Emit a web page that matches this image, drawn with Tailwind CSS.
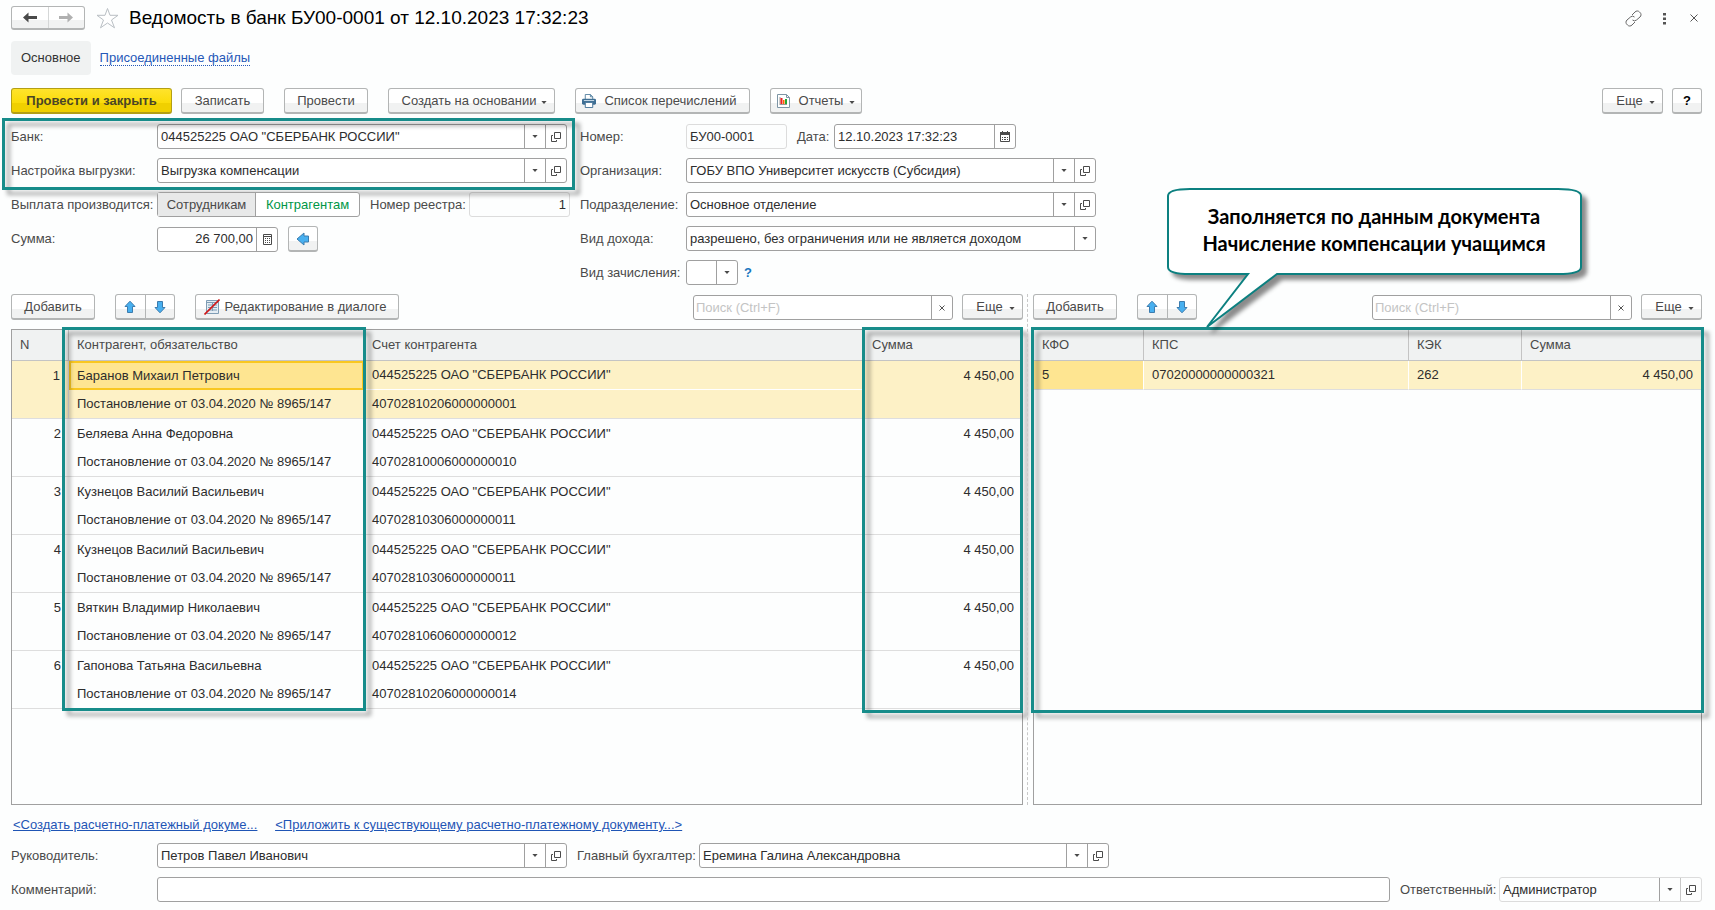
<!DOCTYPE html>
<html lang="ru">
<head>
<meta charset="utf-8">
<title>Ведомость в банк БУ00-0001</title>
<script src="https://cdn.jsdelivr.net/npm/@tailwindcss/browser@4"></script>
</head>
<body class="min-h-screen flex flex-col bg-[#fdfefe] pl-[11px] pr-[13px] pt-[6px] pb-2 text-[13px] leading-5 text-[#4a4a4a] font-['Liberation_Sans',Arial,sans-serif]">

<!-- Shared icons -->
<svg class="hidden" aria-hidden="true">
  <symbol id="caret" viewBox="0 0 7 4"><path d="M0 0h7L3.500 4z" fill="#4a4a4a"/></symbol>
  <symbol id="open" viewBox="0 0 10 10"><path d="M3.500.5h6v6h-6zM2 3.500H.5v6h5V8" fill="none" stroke="#4a4a4a"/></symbol>
  <symbol id="up" viewBox="0 0 14 14"><path d="M7 1.200l5 5.300H9.500v6h-5v-6H2z" fill="#48b0f0" stroke="#3c7cae"/></symbol>
  <symbol id="down" viewBox="0 0 14 14"><path d="M7 12.800l5-5.300H9.500v-6h-5v6H2z" fill="#48b0f0" stroke="#3c7cae"/></symbol>
</svg>

<header class="flex items-center h-6">
  <div class="flex h-6 w-[74px] border border-b-2 border-[#b3b5b5] rounded-[3px] bg-[linear-gradient(#fff_60%,#f1f2f2_60%)]">
    <button aria-label="Назад" class="flex-1 flex items-center justify-center border-r border-[#d5d7d7]"><svg class="w-[14px] h-[11px]" viewBox="0 0 14 11"><path d="M0 5.500L5.500.5v3.500H14v3H5.500v3.500z" fill="#4a4a4a"/></svg></button>
    <button aria-label="Вперед" class="flex-1 flex items-center justify-center"><svg class="w-[14px] h-[11px]" viewBox="0 0 14 11"><path d="M14 5.500L8.500.5v3.500H0v3h8.500v3.500z" fill="#b0b0b0"/></svg></button>
  </div>
  <button aria-label="В избранное" class="ml-[11px]"><svg class="w-[23px] h-[22px]" viewBox="0 0 23 22"><path d="M11.500 1.500l2.500 6.800h8l-6.500 4.700 3 7.800-7-4.800-7 4.800 3-7.800L1 8.300h8z" fill="#fff" stroke="#b9bfc4"/></svg></button>
  <h1 class="ml-[10px] flex-1 text-[19px] text-black">Ведомость в банк БУ00-0001 от 12.10.2023 17:32:23</h1>
  <button aria-label="Получить ссылку"><svg class="w-[17px] h-[17px]" viewBox="0 0 17 17" fill="none" stroke="#666"><path d="M7 5l3-3a3 3 0 0 1 4.500 0l.5.500a3 3 0 0 1 0 4.500l-3.500 3a3 3 0 0 1-4 0M10 12l-3 3a3 3 0 0 1-4.500 0L2 14.500a3 3 0 0 1 0-4.500l3.500-3a3 3 0 0 1 4 0"/></svg></button>
  <button aria-label="Меню" class="ml-5"><svg class="w-[5px] h-[13px]" viewBox="0 0 5 13" fill="#555"><path d="M1 1h3v2.500H1zM1 5.500h3V8H1zM1 10h3v2.500H1z"/></svg></button>
  <button aria-label="Закрыть" class="ml-[23px] mr-1"><svg class="w-2 h-2" viewBox="0 0 8 8"><path d="M.5.5l7 7M7.500.5l-7 7" stroke="#555"/></svg></button>
</header>

<nav class="mt-[11px] flex items-center h-[34px]">
  <a href="#" class="flex items-center h-full px-[10px] rounded-[4px] bg-[#f0f2f2] text-[#333]">Основное</a>
  <a href="#" class="ml-[9px] leading-[15px] text-[#2558b8] border-b border-dotted border-[#2558b8]">Присоединенные файлы</a>
</nav>

<div class="mt-[13px] flex h-[26px] [&>button]:flex [&>button]:items-center [&>button]:justify-center [&>button]:border [&>button]:border-b-2 [&>button]:pt-px [&>button]:rounded-[3px]">
  <button class="w-[161px] font-bold text-[#4a4526] border-[#b39f14] bg-[linear-gradient(#ffe32c,#fbdc0a_60%,#f0d000_60%)]">Провести и закрыть</button>
  <button class="ml-[9px] w-[83px] border-[#b3b5b5] bg-[linear-gradient(#fff_60%,#f1f2f2_60%)]">Записать</button>
  <button class="ml-5 w-[84px] border-[#b3b5b5] bg-[linear-gradient(#fff_60%,#f1f2f2_60%)]">Провести</button>
  <button class="ml-5 w-[167px] gap-[5px] pl-[6px] border-[#b3b5b5] bg-[linear-gradient(#fff_60%,#f1f2f2_60%)]">Создать на основании<svg class="w-[6px] h-[3px] mt-[3px]"><use href="#caret"/></svg></button>
  <button class="ml-5 w-[175px] gap-2 pr-[6px] border-[#b3b5b5] bg-[linear-gradient(#fff_60%,#f1f2f2_60%)]"><svg class="w-[14px] h-[14px]" viewBox="0 0 15 15"><path d="M3.500 6V.5h5.500l2.500 2.500v3" fill="#fff" stroke="#54809f"/><path d="M9 .5V3h2.500" fill="none" stroke="#54809f"/><rect y="5" width="15" height="6.500" rx="1.500" fill="#3f6f94"/><path d="M2 7h11" stroke="#cfe0ec"/><path d="M3.500 9h8v5.500h-8z" fill="#fff" stroke="#3f6f94"/></svg>Список перечислений</button>
  <button class="ml-5 w-[92px] gap-[6px] border-[#b3b5b5] bg-[linear-gradient(#fff_60%,#f1f2f2_60%)]"><svg class="w-[13px] h-[14px] mr-[3px]" viewBox="0 0 13 14"><path d="M.5.5h9l3 3v10H.5z" fill="#fff" stroke="#7d95a5"/><path d="M9.500.5v3h3" fill="none" stroke="#7d95a5"/><path d="M3 3v8M3 10.500h7" stroke="#999"/><path d="M3.500 4h2v6h-2z" fill="#e22"/><path d="M6 6h1.500v4H6z" fill="#f60"/><path d="M8 5h2v5H8z" fill="#2a3"/></svg>Отчеты<svg class="w-[6px] h-[3px] mt-[3px]"><use href="#caret"/></svg></button>
  <button class="ml-auto w-[61px] gap-[6px] pl-[6px] border-[#b3b5b5] bg-[linear-gradient(#fff_60%,#f1f2f2_60%)]">Еще<svg class="w-[6px] h-[3px] mt-[3px]"><use href="#caret"/></svg></button>
  <button class="ml-[9px] w-[30px] font-bold text-black border-[#b3b5b5] bg-[linear-gradient(#fff_60%,#f1f2f2_60%)]">?</button>
</div>

<!-- Document fields -->
<form class="mt-[10px] flex gap-[10px] [&_input]:min-w-0 [&_input]:text-[#2d2d2d] [&_input]:outline-none [&_select]:appearance-none [&_select]:outline-none [&_select]:text-[#2d2d2d]">
  <div class="w-[559px] flex flex-col gap-[9px]">
    <div class="relative flex flex-col gap-[9px]">
      <div class="flex items-center h-[25px] pr-[3px]">
        <label for="bank" class="w-[146px]">Банк:</label>
        <div class="flex flex-1 h-full bg-white border border-[#a0a0a0] rounded-[3px]"><input id="bank" class="flex-1 pl-[3px]" value='044525225 ОАО "СБЕРБАНК РОССИИ"'><button type="button" aria-label="Выбрать" class="w-[21px] border-l border-[#a0a0a0] flex items-center justify-center"><svg class="w-[6px] h-[3px]"><use href="#caret"/></svg></button><button type="button" aria-label="Открыть" class="w-[21px] border-l border-[#a0a0a0] flex items-center justify-center"><svg class="w-[10px] h-[10px]"><use href="#open"/></svg></button></div>
      </div>
      <div class="flex items-center h-[25px] pr-[3px]">
        <label for="setup" class="w-[146px]">Настройка выгрузки:</label>
        <div class="flex flex-1 h-full bg-white border border-[#a0a0a0] rounded-[3px]"><input id="setup" class="flex-1 pl-[3px]" value="Выгрузка компенсации"><button type="button" aria-label="Выбрать" class="w-[21px] border-l border-[#a0a0a0] flex items-center justify-center"><svg class="w-[6px] h-[3px]"><use href="#caret"/></svg></button><button type="button" aria-label="Открыть" class="w-[21px] border-l border-[#a0a0a0] flex items-center justify-center"><svg class="w-[10px] h-[10px]"><use href="#open"/></svg></button></div>
      </div>
      <div class="absolute pointer-events-none -top-[6px] -left-[9px] -right-[5px] h-[72px] border-3 border-[#178c8a] drop-shadow-[5px_5px_2px_rgba(0,0,0,0.35)]"></div>
    </div>
    <div class="flex items-center h-[25px]">
      <span class="w-[146px] whitespace-nowrap">Выплата производится:</span>
      <div role="radiogroup" aria-label="Выплата производится" class="relative flex h-full w-[203px] border border-[#a0a0a0] rounded-[3px] bg-white">
        <input id="pay-emp" type="radio" name="pay" class="sr-only"><label for="pay-emp" class="w-[98px] flex items-center justify-center bg-[#e8e9e9] border-r border-[#a0a0a0]">Сотрудникам</label>
        <input id="pay-ctr" type="radio" name="pay" class="sr-only" checked><label for="pay-ctr" class="flex-1 flex items-center justify-center text-[#009646]">Контрагентам</label>
      </div>
      <label for="reg" class="ml-[10px] w-[99px] whitespace-nowrap">Номер реестра:</label>
      <input id="reg" class="flex-1 h-full px-[3px] text-right border border-[#dcdcdc] rounded-[3px]" value="1" readonly>
    </div>
    <div class="flex items-center h-[26px]">
      <label for="sum" class="w-[146px]">Сумма:</label>
      <div class="flex w-[121px] h-[25px] bg-white border border-[#a0a0a0] rounded-[3px]"><input id="sum" class="flex-1 pr-[3px] text-right" value="26 700,00"><button type="button" aria-label="Калькулятор" class="w-[21px] border-l border-[#a0a0a0] flex items-center justify-center"><svg class="w-[9px] h-[11px]" viewBox="0 0 9 11"><path d="M.5.5h8v10h-8zM0 2.500h9" fill="none" stroke="#4a4a4a"/><path d="M2 4.500h1m1 0h1m1 0h1M2 6.500h1m1 0h1m1 0h1M2 8.500h1m1 0h1m1 0h1" stroke="#4a4a4a"/></svg></button></div>
      <button type="button" aria-label="Заполнить сумму" class="ml-[10px] w-[30px] h-full flex items-center justify-center border border-b-2 border-[#b3b5b5] rounded-[3px] bg-[linear-gradient(#fff_60%,#f1f2f2_60%)]"><svg class="w-[14px] h-[14px]" viewBox="0 0 14 14"><path d="M1 7l7-6v3h4.500v6H8v3z" fill="#48b0f0" stroke="#3c7cae"/></svg></button>
    </div>
  </div>

  <div class="w-[516px] flex flex-col gap-[9px]">
    <div class="flex items-center h-[25px]">
      <label for="num" class="w-[106px]">Номер:</label>
      <input id="num" class="w-[101px] h-full pl-[3px] border border-[#dcdcdc] rounded-[3px]" value="БУ00-0001" readonly>
      <label for="date" class="ml-[10px] w-[37px]">Дата:</label>
      <div class="flex w-[182px] h-full bg-white border border-[#a0a0a0] rounded-[3px]"><input id="date" class="flex-1 pl-[3px]" value="12.10.2023 17:32:23"><button type="button" aria-label="Календарь" class="w-[21px] border-l border-[#a0a0a0] flex items-center justify-center"><svg class="w-[10px] h-[11px]" viewBox="0 0 10 11"><path d="M.5 1.500h9v9h-9z" fill="none" stroke="#4a4a4a"/><path d="M0 1h10v3H0zM2 0h1v1H2zM7 0h1v1H7z" fill="#4a4a4a"/><path d="M2 6.500h1m1 0h2m1 0h1M2 8.500h1m1 0h2m1 0h1" stroke="#4a4a4a"/></svg></button></div>
    </div>
    <div class="flex items-center h-[25px]">
      <label for="org" class="w-[106px]">Организация:</label>
      <div class="flex flex-1 h-full bg-white border border-[#a0a0a0] rounded-[3px]"><input id="org" class="flex-1 pl-[3px]" value="ГОБУ ВПО Университет искусств (Субсидия)"><button type="button" aria-label="Выбрать" class="w-[21px] border-l border-[#a0a0a0] flex items-center justify-center"><svg class="w-[6px] h-[3px]"><use href="#caret"/></svg></button><button type="button" aria-label="Открыть" class="w-[21px] border-l border-[#a0a0a0] flex items-center justify-center"><svg class="w-[10px] h-[10px]"><use href="#open"/></svg></button></div>
    </div>
    <div class="flex items-center h-[25px]">
      <label for="dep" class="w-[106px]">Подразделение:</label>
      <div class="flex flex-1 h-full bg-white border border-[#a0a0a0] rounded-[3px]"><input id="dep" class="flex-1 pl-[3px]" value="Основное отделение"><button type="button" aria-label="Выбрать" class="w-[21px] border-l border-[#a0a0a0] flex items-center justify-center"><svg class="w-[6px] h-[3px]"><use href="#caret"/></svg></button><button type="button" aria-label="Открыть" class="w-[21px] border-l border-[#a0a0a0] flex items-center justify-center"><svg class="w-[10px] h-[10px]"><use href="#open"/></svg></button></div>
    </div>
    <div class="flex items-center h-[25px]">
      <label for="income" class="w-[106px]">Вид дохода:</label>
      <div class="flex flex-1 h-full bg-white border border-[#a0a0a0] rounded-[3px]"><select id="income" class="flex-1 pl-[3px]"><option>разрешено, без ограничения или не является доходом</option></select><span class="w-[21px] border-l border-[#a0a0a0] flex items-center justify-center"><svg class="w-[6px] h-[3px]"><use href="#caret"/></svg></span></div>
    </div>
    <div class="flex items-center h-[25px]">
      <label for="kind" class="w-[106px] whitespace-nowrap">Вид зачисления:</label>
      <div class="flex w-[52px] h-full bg-white border border-[#a0a0a0] rounded-[3px]"><select id="kind" class="flex-1 min-w-0 pl-[3px]"><option></option></select><span class="w-[21px] border-l border-[#a0a0a0] flex items-center justify-center"><svg class="w-[6px] h-[3px]"><use href="#caret"/></svg></span></div>
      <a href="#" class="ml-[6px] font-bold text-[#1a77c0]">?</a>
    </div>
  </div>
</form>

<!-- Tabular sections -->
<div class="mt-[9px] flex-1 grid grid-cols-[1012fr_669fr] gap-[10px] relative">
  <section class="relative flex flex-col after:absolute after:-right-[5px] after:top-0 after:bottom-0 after:border-l after:border-dashed after:border-[#c8c8c8]">
    <div class="flex h-[26px]">
      <button class="w-[84px] pt-px border border-b-2 border-[#b3b5b5] rounded-[3px] bg-[linear-gradient(#fff_60%,#f1f2f2_60%)]">Добавить</button>
      <div class="ml-5 flex w-[60px] border border-b-2 border-[#b3b5b5] rounded-[3px] bg-[linear-gradient(#fff_60%,#f1f2f2_60%)]">
        <button aria-label="Вверх" class="flex-1 flex items-center justify-center border-r border-[#b3b5b5]"><svg class="w-[14px] h-[14px]"><use href="#up"/></svg></button>
        <button aria-label="Вниз" class="flex-1 flex items-center justify-center"><svg class="w-[14px] h-[14px]"><use href="#down"/></svg></button>
      </div>
      <button class="ml-5 w-[204px] pt-px pr-1 flex items-center justify-center gap-[5px] border border-b-2 border-[#b3b5b5] rounded-[3px] bg-[linear-gradient(#fff_60%,#f1f2f2_60%)]"><svg class="w-4 h-4" viewBox="0 0 16 16"><path d="M2.500 1.500h12v13h-12z" fill="#e4edf4" stroke="#7f9db5"/><path d="M3 3.500h11M4 6h4m1 0h4M4 8.500h4m1 0h4M4 11h4m1 0h4M8.500 3v9" stroke="#7f9db5"/><path d="M.5 15.500l15-15" stroke="#d01818" stroke-width="1.600"/></svg>Редактирование в диалоге</button>
      <div class="ml-auto flex w-[260px] mt-px bg-white border border-[#a0a0a0] rounded-[3px]"><input type="text" aria-label="Поиск" placeholder="Поиск (Ctrl+F)" class="flex-1 min-w-0 pl-[2px] placeholder:text-[#c4c4c4]"><button aria-label="Очистить" class="w-[21px] border-l border-[#a0a0a0] flex items-center justify-center"><svg class="w-[6px] h-[6px]" viewBox="0 0 6 6"><path d="M.5.5l5 5M5.500.5l-5 5" stroke="#555"/></svg></button></div>
      <button class="ml-[9px] w-[61px] pt-px flex items-center justify-center gap-[6px] pl-[6px] border border-b-2 border-[#b3b5b5] rounded-[3px] bg-[linear-gradient(#fff_60%,#f1f2f2_60%)]">Еще<svg class="w-[6px] h-[3px] mt-[3px]"><use href="#caret"/></svg></button>
    </div>
    <div class="relative mt-[9px] flex-1 border border-[#a0a0a0]">
      <table class="w-full table-fixed border-separate border-spacing-0 text-[#2d2d2d] [&_td]:h-[29px] [&_td]:p-0 [&_td]:pl-2 [&_td]:whitespace-nowrap [&_td.num]:pr-2 [&_td.num]:text-right [&_tr:nth-child(even)>td]:border-b [&_tr:nth-child(even)>td]:border-[#dedede] [&_td[rowspan]]:border-b [&_td[rowspan]]:border-[#dedede] [&_td[rowspan]]:align-top [&_td[rowspan]]:pt-[5px]">
        <colgroup><col class="w-[57px]"><col class="w-[295px]"><col><col class="w-[158px]"></colgroup>
        <thead><tr class="h-[31px] bg-[#f0f2f2] text-left text-[#4a4a4a] [&>th]:font-normal [&>th]:pl-2 [&>th]:border-b [&>th]:border-[#c4c4c4]">
          <th class="border-r">N</th><th class="border-r">Контрагент, обязательство</th><th class="border-r">Счет контрагента</th><th>Сумма</th></tr></thead>
        <tbody>
          <tr class="bg-[#fdf1c6]"><td rowspan="2" class="num border-r border-r-white">1</td><td class="bg-[#fee591] shadow-[inset_0_0_0_2px_#f9c720]">Баранов Михаил Петрович</td><td class="border-b border-b-white">044525225 ОАО "СБЕРБАНК РОССИИ"</td><td rowspan="2" class="num">4 450,00</td></tr>
          <tr class="bg-[#fdf1c6]"><td>Постановление от 03.04.2020 № 8965/147</td><td>40702810206000000001</td></tr>
          <tr><td rowspan="2" class="num">2</td><td>Беляева Анна Федоровна</td><td>044525225 ОАО "СБЕРБАНК РОССИИ"</td><td rowspan="2" class="num">4 450,00</td></tr>
          <tr><td>Постановление от 03.04.2020 № 8965/147</td><td>40702810006000000010</td></tr>
          <tr><td rowspan="2" class="num">3</td><td>Кузнецов Василий Васильевич</td><td>044525225 ОАО "СБЕРБАНК РОССИИ"</td><td rowspan="2" class="num">4 450,00</td></tr>
          <tr><td>Постановление от 03.04.2020 № 8965/147</td><td>40702810306000000011</td></tr>
          <tr><td rowspan="2" class="num">4</td><td>Кузнецов Василий Васильевич</td><td>044525225 ОАО "СБЕРБАНК РОССИИ"</td><td rowspan="2" class="num">4 450,00</td></tr>
          <tr><td>Постановление от 03.04.2020 № 8965/147</td><td>40702810306000000011</td></tr>
          <tr><td rowspan="2" class="num">5</td><td>Вяткин Владимир Николаевич</td><td>044525225 ОАО "СБЕРБАНК РОССИИ"</td><td rowspan="2" class="num">4 450,00</td></tr>
          <tr><td>Постановление от 03.04.2020 № 8965/147</td><td>40702810606000000012</td></tr>
          <tr><td rowspan="2" class="num">6</td><td>Гапонова Татьяна Васильевна</td><td>044525225 ОАО "СБЕРБАНК РОССИИ"</td><td rowspan="2" class="num">4 450,00</td></tr>
          <tr><td>Постановление от 03.04.2020 № 8965/147</td><td>40702810206000000014</td></tr>
        </tbody>
      </table>
      <div class="absolute pointer-events-none -top-[3px] left-[50px] w-[304px] h-[384px] border-3 border-[#178c8a] drop-shadow-[5px_5px_2px_rgba(0,0,0,0.35)]"></div>
      <div class="absolute pointer-events-none -top-[3px] -right-px w-[161px] h-[386px] border-3 border-[#178c8a] drop-shadow-[5px_5px_2px_rgba(0,0,0,0.35)]"></div>
    </div>
  </section>

  <section class="relative flex flex-col">
    <div class="flex h-[26px]">
      <button class="w-[84px] pt-px border border-b-2 border-[#b3b5b5] rounded-[3px] bg-[linear-gradient(#fff_60%,#f1f2f2_60%)]">Добавить</button>
      <div class="ml-5 flex w-[60px] border border-b-2 border-[#b3b5b5] rounded-[3px] bg-[linear-gradient(#fff_60%,#f1f2f2_60%)]">
        <button aria-label="Вверх" class="flex-1 flex items-center justify-center border-r border-[#b3b5b5]"><svg class="w-[14px] h-[14px]"><use href="#up"/></svg></button>
        <button aria-label="Вниз" class="flex-1 flex items-center justify-center"><svg class="w-[14px] h-[14px]"><use href="#down"/></svg></button>
      </div>
      <div class="ml-auto flex w-[260px] mt-px bg-white border border-[#a0a0a0] rounded-[3px]"><input type="text" aria-label="Поиск" placeholder="Поиск (Ctrl+F)" class="flex-1 min-w-0 pl-[2px] placeholder:text-[#c4c4c4]"><button aria-label="Очистить" class="w-[21px] border-l border-[#a0a0a0] flex items-center justify-center"><svg class="w-[6px] h-[6px]" viewBox="0 0 6 6"><path d="M.5.5l5 5M5.500.5l-5 5" stroke="#555"/></svg></button></div>
      <button class="ml-[9px] w-[61px] pt-px flex items-center justify-center gap-[6px] pl-[6px] border border-b-2 border-[#b3b5b5] rounded-[3px] bg-[linear-gradient(#fff_60%,#f1f2f2_60%)]">Еще<svg class="w-[6px] h-[3px] mt-[3px]"><use href="#caret"/></svg></button>
    </div>
    <div class="relative mt-[9px] flex-1 border border-[#a0a0a0]">
      <table class="w-full table-fixed border-separate border-spacing-0 text-[#2d2d2d]">
        <colgroup><col class="w-[110px]"><col><col class="w-[113px]"><col class="w-[179px]"></colgroup>
        <thead><tr class="h-[31px] bg-[#f0f2f2] text-left text-[#4a4a4a] [&>th]:font-normal [&>th]:pl-2 [&>th]:border-b [&>th]:border-[#c4c4c4]">
          <th class="border-r">КФО</th><th class="border-r">КПС</th><th class="border-r">КЭК</th><th>Сумма</th></tr></thead>
        <tbody><tr class="h-[29px] bg-[#fdf1c6] *:pl-2 *:border-b *:border-b-[#dedede] *:not-last:border-r *:not-last:border-r-white"><td class="bg-[#fee591]">5</td><td>07020000000000321</td><td>262</td><td class="pr-2 text-right">4 450,00</td></tr></tbody>
      </table>
      <div class="absolute pointer-events-none -top-[3px] -left-[3px] -right-[3px] h-[386px] border-3 border-[#178c8a] drop-shadow-[5px_5px_2px_rgba(0,0,0,0.35)]"></div>
    </div>
    <!-- Callout pointing at the right table -->
    <div class="absolute right-[120px] -top-[107px] w-[416px] h-[142px]">
      <svg class="absolute inset-0 w-full h-full overflow-visible drop-shadow-[5px_5px_2px_rgba(0,0,0,0.45)]" viewBox="0 0 416 142"><path d="M24 2H392Q415 2 415 9V80Q415 87 392 87H111L41 140L82 87H24Q2 87 2 80V9Q2 2 24 2Z" fill="#fff" stroke="#0c8080" stroke-width="2"/></svg>
      <p class="relative pt-4 text-center text-[20px] leading-[27px] font-bold text-black font-[Lato,sans-serif]">Заполняется по данным документа<br>Начисление компенсации учащимся</p>
    </div>
  </section>
</div>

<footer class="[&_input]:min-w-0 [&_input]:text-[#2d2d2d] [&_input]:outline-none">
  <div class="mt-[10px] h-5 flex gap-[18px] pl-[2px] text-[#1f55b5] underline">
    <a href="#">&lt;Создать расчетно-платежный докуме...</a>
    <a href="#">&lt;Приложить к существующему расчетно-платежному документу...&gt;</a>
  </div>
  <div class="mt-2 flex items-center h-[25px]">
    <label for="head" class="w-[146px]">Руководитель:</label>
    <div class="flex w-[410px] h-full bg-white border border-[#a0a0a0] rounded-[3px]"><input id="head" class="flex-1 pl-[3px]" value="Петров Павел Иванович"><button aria-label="Выбрать" class="w-[21px] border-l border-[#a0a0a0] flex items-center justify-center"><svg class="w-[6px] h-[3px]"><use href="#caret"/></svg></button><button aria-label="Открыть" class="w-[21px] border-l border-[#a0a0a0] flex items-center justify-center"><svg class="w-[10px] h-[10px]"><use href="#open"/></svg></button></div>
    <label for="acc" class="ml-[10px] w-[122px] whitespace-nowrap">Главный бухгалтер:</label>
    <div class="flex w-[410px] h-full bg-white border border-[#a0a0a0] rounded-[3px]"><input id="acc" class="flex-1 pl-[3px]" value="Еремина Галина Александровна"><button aria-label="Выбрать" class="w-[21px] border-l border-[#a0a0a0] flex items-center justify-center"><svg class="w-[6px] h-[3px]"><use href="#caret"/></svg></button><button aria-label="Открыть" class="w-[21px] border-l border-[#a0a0a0] flex items-center justify-center"><svg class="w-[10px] h-[10px]"><use href="#open"/></svg></button></div>
  </div>
  <div class="mt-[9px] flex items-center h-[25px]">
    <label for="comment" class="w-[146px]">Комментарий:</label>
    <input id="comment" class="flex-1 h-full px-[3px] bg-white border border-[#a0a0a0] rounded-[3px]">
    <label for="resp" class="ml-[10px] w-[99px] whitespace-nowrap">Ответственный:</label>
    <div class="flex w-[203px] h-full border border-[#dcdcdc] rounded-[3px]"><input id="resp" class="flex-1 pl-[3px]" value="Администратор"><button aria-label="Выбрать" class="w-[21px] border-l border-[#a0a0a0] flex items-center justify-center"><svg class="w-[6px] h-[3px]"><use href="#caret"/></svg></button><button aria-label="Открыть" class="w-[21px] border-l border-[#c8c8c8] flex items-center justify-center"><svg class="w-[10px] h-[10px]"><use href="#open"/></svg></button></div>
  </div>
</footer>
</body>
</html>
